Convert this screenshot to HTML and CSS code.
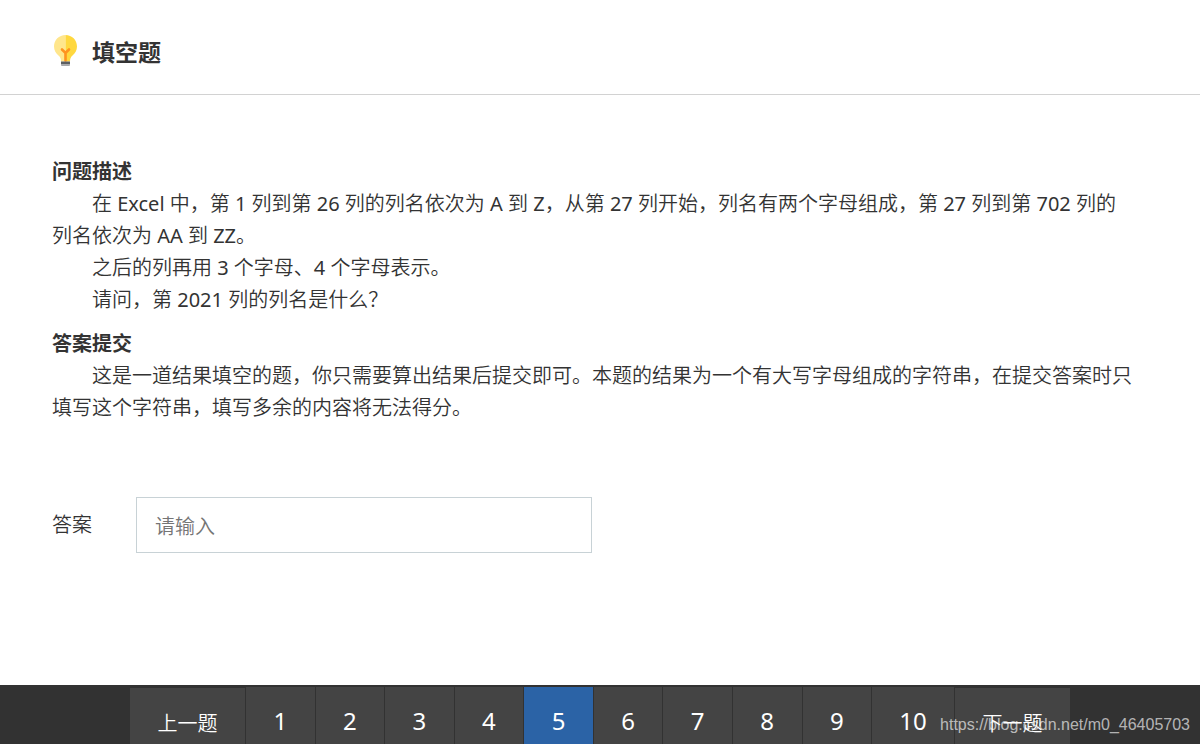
FILE: index.html
```html
<!DOCTYPE html>
<html lang="zh-CN">
<head>
  <meta charset="UTF-8">
  <title>填空题</title>
  <link rel="stylesheet" href="styles.css">
</head>
<body>
  <header class="header">
    <svg class="bulb" viewBox="-2 0 26 32" aria-hidden="true">
      <path fill="#ffe68c" d="M11.500 0C5 0 0 5 0 11.500c0 4 2 7 4.500 9C6.500 22.300 7 24 7 26.500h4.500z"/>
      <path fill="#ffd83f" d="M11.500 0C18 0 23 5 23 11.500c0 4-2 7-4.500 9C16.500 22.300 16 24 16 26.500h-4.500z"/>
      <path fill="none" stroke="#ff931f" stroke-width="2.600" stroke-linecap="round" d="M8 14.500l3.500 3.500 3.500-3.500M11.500 18V25.500"/>
      <path fill="#5c5f63" d="M7 26.500h9v3H7z"/>
      <path fill="#a5a7aa" d="M7 29.500h9v1l-1 .5H8l-1-.5z"/>
    </svg>
    <h1>填空题</h1>
  </header>

  <main class="content">
    <section class="section">
      <h2>问题描述</h2>
      <p>在 Excel 中，第 1 列到第 26 列的列名依次为 A 到 Z，从第 27 列开始，列名有两个字母组成，第 27 列到第 702 列的列名依次为 AA 到 ZZ。</p>
      <p>之后的列再用 3 个字母、4 个字母表示。</p>
      <p>请问，第 2021 列的列名是什么？</p>
    </section>

    <section class="section">
      <h2>答案提交</h2>
      <p>这是一道结果填空的题，你只需要算出结果后提交即可。本题的结果为一个有大写字母组成的字符串，在提交答案时只填写这个字符串，填写多余的内容将无法得分。</p>
    </section>

    <form class="answer">
      <label for="answer">答案</label>
      <input type="text" id="answer" name="answer" placeholder="请输入">
    </form>
  </main>

  <footer class="footer">
    <nav class="pager">
      <button type="button" class="step">上一题</button>
      <button type="button" class="num">1</button>
      <button type="button" class="num">2</button>
      <button type="button" class="num">3</button>
      <button type="button" class="num">4</button>
      <button type="button" class="num active">5</button>
      <button type="button" class="num">6</button>
      <button type="button" class="num">7</button>
      <button type="button" class="num">8</button>
      <button type="button" class="num">9</button>
      <button type="button" class="num wide">10</button>
      <button type="button" class="step">下一题</button>
    </nav>
    <span class="watermark">https://blog.csdn.net/m0_46405703</span>
  </footer>
</body>
</html>
```
FILE: styles.css
```css
* {
  box-sizing: border-box;
}
body {
  display: flex;
  flex-direction: column;
  min-height: 100vh;
  margin: 0;
  background: #fff;
  color: #333;
  font-family: "Noto Sans", "Noto Sans CJK SC DemiLight", "Noto Sans CJK SC", sans-serif;
  font-size: 20px;
  line-height: 32px;
}
h1, h2, p {
  margin: 0;
}
h1, h2 {
  font-family: "Noto Sans", "Noto Sans CJK SC", sans-serif;
}
.header {
  display: flex;
  align-items: flex-start;
  gap: 14px;
  padding: 35px 52px 26px;
  border-bottom: 1px solid #d2d2d2;
}
.bulb {
  width: 26px;
  height: 32px;
}
h1 {
  padding-top: 1px;
  font-size: 23px;
  line-height: 32px;
}
.content {
  flex: 1;
  padding: 61px 66px 61px 52px;
}
.section {
  margin-bottom: 12px;
}
h2 {
  font-size: 20px;
  line-height: 32px;
}
.section p {
  text-indent: 2em;
}
.answer {
  display: flex;
  align-items: center;
  gap: 44px;
  margin-top: 73px;
}
.answer input {
  width: 456px;
  height: 56px;
  padding: 2px 18px 0;
  border: 1px solid #c8d2d6;
  background: #fff;
  color: #333;
  font: inherit;
}
.answer input::placeholder {
  color: #757575;
}
.footer {
  position: relative;
  padding-top: 2px;
  background: #323232;
}
.pager {
  display: flex;
  gap: 1px;
  max-width: 940px;
  margin: 0 auto;
}
.pager button {
  height: 57px;
  padding: 0;
  border: none;
  background: #444;
  color: #fff;
  font-family: inherit;
  cursor: pointer;
}
.pager .num {
  flex: 1;
  padding-top: 10px;
  font-size: 24px;
}
.pager .wide {
  flex: 0 0 82px;
}
.pager .step {
  flex: 0 0 115px;
  height: 56px;
  margin-top: 1px;
  padding-top: 12px;
  font-size: 20px;
}
.pager .active {
  background: #2b63a6;
}
.watermark {
  position: absolute;
  right: 10px;
  bottom: 3px;
  color: rgba(255, 255, 255, 0.65);
  font-family: "Liberation Sans", sans-serif;
  font-size: 16px;
}
```
